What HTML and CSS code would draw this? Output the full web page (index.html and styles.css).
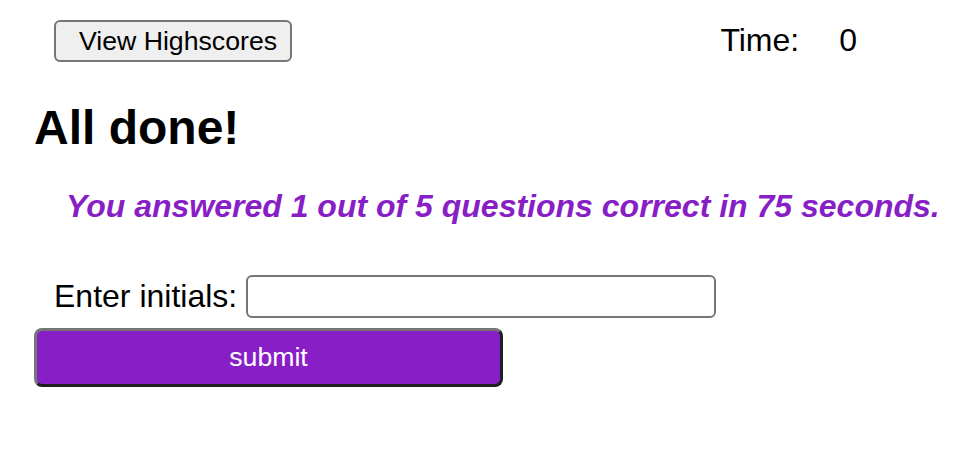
FILE: index.html
```html
<!DOCTYPE html>
<html>
<head>
<meta charset="utf-8">
<link rel="stylesheet" href="styles.css">
</head>
<body>
<header class="top">
  <button class="hs-btn">View Highscores</button>
  <div class="timer"><span class="timer-label">Time:</span><span class="timer-value">0</span></div>
</header>
<main class="content">
  <h2 class="title">All done!</h2>
  <p class="result">You answered 1 out of 5 questions correct in 75 seconds.</p>
  <form class="score-form">
    <div class="field">
      <label class="field-label" for="initials">Enter initials:</label>
      <input class="field-input" id="initials" type="text">
    </div>
    <button class="submit-btn" type="button">submit</button>
  </form>
</main>
</body>
</html>
```

FILE: styles.css
```css
html, body {
  margin: 0;
  padding: 0;
  background: #ffffff;
}
body {
  font-family: "Liberation Sans", Arial, sans-serif;
  color: #000;
  width: 968px;
  height: 464px;
  overflow: hidden;
}
.top {
  display: flex;
  align-items: flex-start;
  padding: 20px 111px 0 54px;
}
.hs-btn {
  box-sizing: border-box;
  height: 42px;
  padding: 0 13px 0 23px;
  font-family: "Liberation Sans", Arial, sans-serif;
  font-size: 26.67px;
  color: #000;
  background: #efefef;
  border: 2px solid #767676;
  border-radius: 6px;
}
.timer {
  margin-left: auto;
  margin-top: 2px;
  font-size: 32px;
  line-height: 37px;
  display: flex;
}
.timer-value {
  margin-left: 40px;
}
.content {
  padding: 0 33px 0 34px;
}
.title {
  margin: 38px 0 0;
  font-size: 48px;
  line-height: 55px;
  font-weight: bold;
}
.result {
  margin: 33px 0 0 32px;
  font-size: 32px;
  line-height: 37px;
  font-weight: bold;
  font-style: italic;
  color: #881ec5;
  white-space: nowrap;
}
.score-form {
  margin-top: 50px;
}
.field {
  display: flex;
  align-items: center;
  padding-left: 20px;
}
.field-label {
  font-size: 32px;
  line-height: 37px;
  margin-right: 9px;
}
.field-input {
  box-sizing: border-box;
  width: 470px;
  height: 43px;
  border: 2px solid #767676;
  border-radius: 6px;
  padding: 0 6px;
  font-size: 26px;
  background: #fff;
}
.submit-btn {
  display: block;
  box-sizing: border-box;
  margin-top: 10px;
  width: 469px;
  height: 59px;
  background: #881ec5;
  color: #fff;
  font-family: "Liberation Sans", Arial, sans-serif;
  font-size: 26.67px;
  border: 3px solid;
  border-color: #767676 #1f1f1f #1f1f1f #767676;
  border-radius: 8px;
  padding: 0;
}
```
